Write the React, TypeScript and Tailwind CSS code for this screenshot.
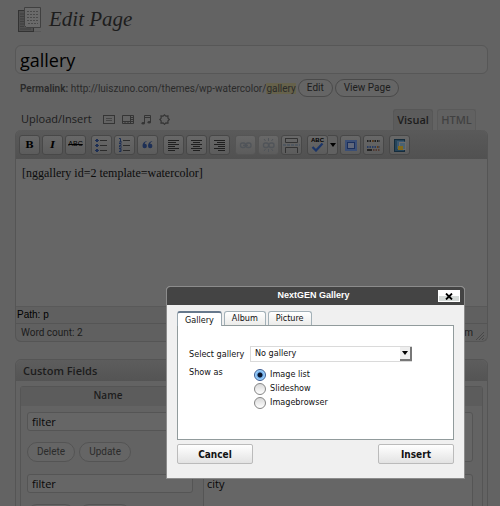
import type { ReactNode } from 'react';

const sans = "font-['Open_Sans','Noto_Sans',sans-serif]";
const verdana = "font-['DejaVu_Sans_Condensed','DejaVu_Sans',sans-serif]";

function PagesIcon() {
  return (
    <svg width="25" height="26" viewBox="0 0 25 26" aria-hidden="true">
      <rect x="1.5" y="3.5" width="15" height="21" fill="#505050" stroke="#333333" />
      <path d="M3 7h4M3 9.500h4M3 12h4M3 14.500h4M3 17h4M3 19.500h4M3 22h11" stroke="#3f3f3f" />
      <path d="M7.500.5h16v20h-14l-2-2z" fill="#6a6a6a" stroke="#404040" />
      <path d="M10 4.500h11M10 7.500h11M10 10.500h11M10 13.500h11M11 16.500h10" stroke="#4a4a4a" strokeDasharray="2 1" />
      <path d="M17 24.500h7" stroke="#585858" />
    </svg>
  );
}

function Pill({ children, wide = false }: { children: ReactNode; wide?: boolean }) {
  return (
    <button
      type="button"
      className={`${wide ? 'h-5 px-[9px] text-[#2b2b2b] border-[#545454]' : 'h-[18px] px-2 text-[#1c1c1c] border-[#4a4a4a]'} flex items-center rounded-full border bg-[#656565] font-['Roboto',sans-serif] text-[10px] leading-none whitespace-nowrap`}
    >
      {children}
    </button>
  );
}

function Tool({ label, faded = false, children }: { label: string; faded?: boolean; children: ReactNode }) {
  return (
    <button
      type="button"
      aria-label={label}
      className={`flex h-5 w-[21px] shrink-0 items-center justify-center rounded-[3px] border bg-linear-to-b from-[#686868] to-[#5c5c5c] ${faded ? 'border-[#555555]' : 'border-[#484848]'}`}
    >
      {children}
    </button>
  );
}

function Glyph({ children }: { children: ReactNode }) {
  return (
    <svg width="17" height="16" viewBox="0 0 17 16" fill="none" aria-hidden="true">
      {children}
    </svg>
  );
}

function Chain({ broken = false }: { broken?: boolean }) {
  return (
    <Glyph>
      <g stroke="#505459" strokeWidth="1.3">
        <rect x="3.500" y="6" width="5" height="4.500" rx="2" />
        <rect x="9" y="6" width="5" height="4.500" rx="2" />
        {broken ? <path d="M8.500 4V1M5.500 4L4 2M11.500 4L13 2M8.500 12v3M5.500 12L4 14M11.500 12l1.500 2" strokeWidth="1" /> : <path d="M6 8.300h5" />}
      </g>
    </Glyph>
  );
}

function Toolbar() {
  return (
    <div className="flex h-[29px] items-center gap-[5px] rounded-t-md bg-linear-to-b from-[#5a5a5a] to-[#515151] px-[3px]">
      <div className="flex gap-0.5">
        <Tool label="Bold"><span className="font-['DejaVu_Serif',serif] text-[10px] font-bold text-black">B</span></Tool>
        <Tool label="Italic"><span className="font-['DejaVu_Serif',serif] text-[10px] font-bold text-black italic">I</span></Tool>
        <Tool label="Strikethrough"><span className="font-['Liberation_Sans',sans-serif] text-[7px] text-black line-through">ABC</span></Tool>
      </div>
      <div className="flex gap-0.5">
        <Tool label="Bullet list">
          <Glyph>
            <path d="M7 3.500h7M7 8.500h7M7 13.500h7" stroke="#2b2b2b" />
            <path d="M3 2h2v1h1v1H5v1H3V4H2V3h1zM3 7h2v1h1v1H5v1H3V9H2V8h1zM3 12h2v1h1v1H5v1H3v-1H2v-1h1z" fill="#1d2f55" />
          </Glyph>
        </Tool>
        <Tool label="Numbered list">
          <Glyph>
            <path d="M7 3.500h7M7 8.500h7M7 13.500h7" stroke="#2b2b2b" />
            <path d="M3 1.500h1.500V5M3 5h3M3 6.500h2v2H3.500V10H6M3 11.500h2v3H3M3.500 13H5" stroke="#1d2f55" />
          </Glyph>
        </Tool>
        <Tool label="Blockquote">
          <Glyph>
            <path d="M7.500 4C5 4.500 3.500 6.500 3.500 9a2.200 2.200 0 1 0 2.200-2.200C5.700 5.800 6.500 5 7.800 4.600zM13 4C10.500 4.500 9 6.500 9 9a2.200 2.200 0 1 0 2.200-2.200c0-1 .8-1.800 2.100-2.200z" fill="#1d2f55" />
          </Glyph>
        </Tool>
      </div>
      <div className="flex gap-0.5">
        <Tool label="Align left"><Glyph><path d="M3 3.500h11M3 5.500h8M3 7.500h11M3 9.500h7M3 11.500h11M3 13.500h7" stroke="#1f1f1f" /></Glyph></Tool>
        <Tool label="Align center"><Glyph><path d="M3 3.500h11M5 5.500h7M3 7.500h11M5 9.500h7M3 11.500h11M5 13.500h7" stroke="#1f1f1f" /></Glyph></Tool>
        <Tool label="Align right"><Glyph><path d="M3 3.500h11M6 5.500h8M3 7.500h11M7 9.500h7M3 11.500h11M7 13.500h7" stroke="#1f1f1f" /></Glyph></Tool>
      </div>
      <div className="flex gap-0.5">
        <Tool label="Insert link" faded><Chain /></Tool>
        <Tool label="Unlink" faded><Chain broken /></Tool>
        <Tool label="Insert more tag">
          <Glyph>
            <path d="M2.500 1v4.500h12V1.500h-12M2.500 16v-5.500h12V16" stroke="#333333" />
            <path d="M0 8h17" stroke="#3f4c5c" strokeDasharray="3 1" />
          </Glyph>
        </Tool>
      </div>
      <div className="flex gap-0.5">
        <div className="flex">
          <Tool label="Check spelling">
            <span className="flex flex-col items-center">
              <span className="h-1.5 font-['Liberation_Sans',sans-serif] text-[6px] leading-[6px] font-bold text-black">ABC</span>
              <svg width="13" height="9" viewBox="0 0 13 9" aria-hidden="true"><path d="M1.500 4L5 7.500L11.500.5" fill="none" stroke="#1b3568" strokeWidth="2.200" /></svg>
            </span>
          </Tool>
          <button type="button" aria-label="Spelling languages" className="flex h-5 w-2.5 items-center justify-center rounded-r-[3px] border border-l-0 border-[#484848] bg-[#616161]">
            <svg width="6" height="4" viewBox="0 0 6 4" aria-hidden="true"><path d="M0 0h6L3 4z" fill="#000" /></svg>
          </button>
        </div>
        <Tool label="Full screen">
          <Glyph>
            <rect x="3" y="3" width="12" height="11" fill="#3b4f76" />
            <rect x="5.500" y="5.500" width="7" height="6" fill="#61687a" stroke="#1b2f5c" />
          </Glyph>
        </Tool>
        <Tool label="Kitchen sink">
          <Glyph>
            <path d="M2 4h13" stroke="#1f1f1f" strokeWidth="2" strokeDasharray="1.500 1" />
            <path d="M2 10h13" stroke="#273b62" strokeWidth="2" strokeDasharray="1.500 1" />
            <path d="M2 13h5" stroke="#111111" strokeWidth="1.500" />
            <path d="M8 13h7" stroke="#4d2f25" strokeWidth="1.500" strokeDasharray="1.500 1" />
            <path d="M7 4h1.500M12 10h1.500" stroke="#5c3a1a" strokeWidth="2" />
          </Glyph>
        </Tool>
      </div>
      <Tool label="Add NextGEN gallery">
        <Glyph>
          <rect x="3.500" y="2.500" width="10" height="12" fill="#25445a" stroke="#152c3c" />
          <path d="M6 4h7l2 2v6H6z" fill="#3b5870" />
          <rect x="8.500" y="5.500" width="6" height="7" fill="#4b6272" stroke="#6c6c6c" />
          <rect x="7" y="9" width="5" height="4" fill="#80691b" />
        </Glyph>
      </Tool>
    </div>
  );
}

function MediaIcons() {
  return (
    <div className="flex items-center gap-[7px]">
      <button type="button" aria-label="Add an image">
        <svg width="12" height="10" viewBox="0 0 12 10" fill="none" aria-hidden="true"><rect x=".5" y=".5" width="11" height="8" stroke="#353535" /><path d="M3 3.500h6M3 5.500h6" stroke="#444444" /></svg>
      </button>
      <button type="button" aria-label="Add video">
        <svg width="12" height="10" viewBox="0 0 12 10" fill="none" aria-hidden="true"><path d="M.5.5h11v8H.5zM.5 6.500h11M8.500.5v8M8.500 2.500h3M8.500 4.500h3M3 7v1M6 7v1" stroke="#353535" /></svg>
      </button>
      <button type="button" aria-label="Add audio">
        <svg width="11" height="11" viewBox="0 0 11 11" aria-hidden="true"><path d="M3.500 9V1.500h6V8M3.500 3.500h6" fill="none" stroke="#353535" /><ellipse cx="2.200" cy="9.200" rx="1.700" ry="1.300" fill="#353535" /><ellipse cx="8.200" cy="8.200" rx="1.700" ry="1.300" fill="#353535" /></svg>
      </button>
      <button type="button" aria-label="Add media">
        <svg width="11" height="11" viewBox="0 0 11 11" fill="none" aria-hidden="true"><path d="M5.500.8L6.900 2.200L9 2L8.900 4.100L10.300 5.500L8.900 6.900L9 9L6.900 8.900L5.500 10.300L4.100 8.900L2 9L2.200 6.900L.8 5.500L2.200 4.100L2 2L4.100 2.200z" stroke="#353535" strokeWidth="1.200" /></svg>
      </button>
    </div>
  );
}

function FieldRow({ name, value }: { name: string; value: string }) {
  return (
    <div className="grid grid-cols-[182px_1fr] pr-[9px]">
      <div className="flex flex-col gap-[11px] pr-2.5 pl-1.5">
        <input
          aria-label="Field name"
          defaultValue={name}
          className="h-[19px] w-full rounded-[3px] border border-[#555555] bg-[#666666] px-1 text-[11px] font-medium text-[#080808]"
        />
        <div className="flex gap-1">
          <Pill wide>Delete</Pill>
          <Pill wide>Update</Pill>
        </div>
      </div>
      <textarea
        aria-label="Field value"
        defaultValue={value}
        className="h-[50px] w-full resize-none rounded-[3px] border border-[#555555] bg-[#666666] px-[3px] py-px text-[11px] leading-4 font-medium text-[#080808]"
      />
    </div>
  );
}

function DialogTab({ label, active = false }: { label: string; active?: boolean }) {
  return (
    <button
      type="button"
      role="tab"
      aria-selected={active}
      className={`rounded-t-[3px] border border-b-0 px-[7px] text-[9px] text-[#111111] ${active ? 'h-[15px] border-[#9aa8b0] border-t-2 border-t-[#66788c] bg-white leading-3' : 'mb-px h-3.5 border-[#a3b1b8] bg-linear-to-b from-white to-[#ececea] leading-[13px]'}`}
    >
      {label}
    </button>
  );
}

function Choice({ label, checked = false }: { label: string; checked?: boolean }) {
  return (
    <label className="flex h-3.5 items-center gap-1">
      <input
        type="radio"
        name="showtype"
        defaultChecked={checked}
        className="size-3 appearance-none rounded-full border border-[#858585] bg-linear-to-b from-[#d9d9d9] to-white checked:border-[#3c5c94] checked:bg-[radial-gradient(circle,#08142c_0_2px,#78b2ee_3px,#a7dcff_5px)]"
      />
      {label}
    </label>
  );
}

function GalleryDialog() {
  return (
    <div
      role="dialog"
      aria-label="NextGEN Gallery"
      className={`${verdana} absolute top-[286px] left-[166px] w-[299px] overflow-hidden rounded-t-[4px] border border-[#8c8c8c] bg-[#f0f0f0] text-[9px] text-[#111111]`}
    >
      <div className="grid h-[18px] grid-cols-[1fr_auto_1fr] items-center bg-[#444444] pr-1">
        <h2 className="col-start-2 font-['Liberation_Sans',sans-serif] text-[9px] font-bold text-white">NextGEN Gallery</h2>
        <button type="button" aria-label="Close" className="flex h-3 w-[22px] items-center justify-center justify-self-end border border-white bg-linear-to-b from-white from-50% to-[#d5dad8] to-50%">
          <svg width="8" height="7" viewBox="0 0 8 7" aria-hidden="true"><path d="M1 .5L7 6.500M7 .5L1 6.500" stroke="#000" strokeWidth="1.800" /></svg>
        </button>
      </div>
      <form className="px-2.5 pt-1.5 pb-3.5" onSubmit={(event) => event.preventDefault()}>
        <div role="tablist" className="relative z-10 -mb-px flex items-end gap-0.5">
          <DialogTab label="Gallery" active />
          <DialogTab label="Album" />
          <DialogTab label="Picture" />
        </div>
        <div className="grid h-[115px] grid-cols-[61px_1fr] content-start gap-y-1 border border-[#919b9c] bg-white pt-5 pl-[11px]">
          <label htmlFor="gallery" className="leading-4 whitespace-nowrap">Select gallery</label>
          <div className="relative w-[162px]">
            <select id="gallery" className="block h-4 w-full appearance-none border border-[#dadada] bg-white pl-1 text-[9px]">
              <option>No gallery</option>
            </select>
            <span className="pointer-events-none absolute top-px right-0 flex h-3.5 w-3 items-center justify-center border-r-2 border-b-2 border-[#777777] bg-[#eeeeee]">
              <svg width="6" height="4" viewBox="0 0 6 4" aria-hidden="true"><path d="M0 0h6L3 4z" fill="#000" /></svg>
            </span>
          </div>
          <span>Show as</span>
          <div role="radiogroup" aria-label="Show as" className="pt-0.5 pl-1">
            <Choice label="Image list" checked />
            <Choice label="Slideshow" />
            <Choice label="Imagebrowser" />
          </div>
        </div>
        <div className="mt-1 flex justify-between text-[10px] font-bold">
          <button type="button" className="h-5 w-[76px] rounded-xs border border-[#bbbbbb] bg-linear-to-b from-white to-[#e3e3e3]">Cancel</button>
          <button type="submit" className="h-5 w-[76px] rounded-xs border border-[#bbbbbb] bg-linear-to-b from-white to-[#e3e3e3]">Insert</button>
        </div>
      </form>
    </div>
  );
}

export default function App() {
  return (
    <div className={`${sans} relative h-screen overflow-hidden bg-[#636363] text-[#1c1c1c]`}>
      <main className="pr-3 pl-[15px]">
        <header className="flex h-[45px] items-center gap-[7px] pb-[5px] pl-0.5">
          <PagesIcon />
          <h1 className="font-['Liberation_Serif',serif] text-[21px] text-[#1d1d1d] italic">Edit Page</h1>
        </header>
        <input
          aria-label="Title"
          defaultValue="gallery"
          className="block h-[29px] w-full rounded-md border border-[#575757] bg-[#666666] px-1 text-[18px] font-medium text-black"
        />
        <div className="mt-[5px] flex h-[18px] items-center gap-0.5 pl-[5px] font-['Roboto',sans-serif] text-[10px] text-[#2a2a2a]">
          <p className="whitespace-nowrap">
            <strong className="font-semibold">Permalink:</strong> http://luiszuno.com/themes/wp-watercolor/<mark className="bg-[#66624b] text-inherit">gallery</mark>
          </p>
          <Pill>Edit</Pill>
          <Pill>View Page</Pill>
        </div>
        <div className="mt-3 flex h-[21px] items-end justify-between pr-3 pl-1.5">
          <div className="flex h-full items-center gap-[11px]">
            <span className="text-[11px] font-medium">Upload/Insert</span>
            <MediaIcons />
          </div>
          <div className="flex gap-1 text-[11px] font-semibold">
            <button type="button" className="h-[21px] w-10 rounded-t-[3px] border border-b-0 border-[#575757] bg-[#5c5c5c]">Visual</button>
            <button type="button" className="h-[21px] w-[39px] rounded-t-[3px] border border-b-0 border-[#5a5a5a] bg-[#616161] text-[#414141]">HTML</button>
          </div>
        </div>
        <section className="rounded-md border border-t-0 border-[#555555] bg-[#606060]">
          <Toolbar />
          <textarea
            aria-label="Content"
            defaultValue="[nggallery id=2 template=watercolor]"
            className="block h-[147px] w-full resize-none bg-[#666666] px-1.5 py-1.5 font-['Liberation_Serif',serif] text-[12px] leading-4 text-[#0c0c0c]"
          />
          <div className="h-[17px] border-t border-[#595959] px-px font-['Liberation_Sans',sans-serif] text-[10px] leading-4 text-black">Path: p</div>
          <div className="flex h-[18px] justify-between border-t border-[#555555] pr-0.5 pl-[5px] font-['Roboto',sans-serif] text-[10px] leading-[17px]">
            <span>Word count: 2</span>
            <span className="flex items-end gap-0.5">
              om
              <svg width="10" height="14" viewBox="0 0 10 14" aria-hidden="true"><path d="M1 13L9 5M4 13L9 8M7 13L9 11" stroke="#484848" /></svg>
            </span>
          </div>
        </section>
        <section className="mt-[17px] rounded-md border border-[#555555] bg-[#636363]">
          <h2 className="h-[21px] rounded-t-md bg-linear-to-b from-[#5d5d5d] to-[#545454] pl-[7px] text-[11px] leading-[21px] font-semibold">Custom Fields</h2>
          <div className="mx-1 mt-[5px] rounded-[3px] border border-[#555555] bg-[#636363]">
            <div className="mb-1.5 grid h-[19px] grid-cols-[182px_1fr] bg-[#5c5c5c] text-center text-[10px] leading-[17px] font-semibold">
              <span className="pr-2">Name</span>
              <span>Value</span>
            </div>
            <div className="flex flex-col gap-3">
              <FieldRow name="filter" value="" />
              <FieldRow name="filter" value="city" />
            </div>
          </div>
        </section>
      </main>
      <GalleryDialog />
    </div>
  );
}
